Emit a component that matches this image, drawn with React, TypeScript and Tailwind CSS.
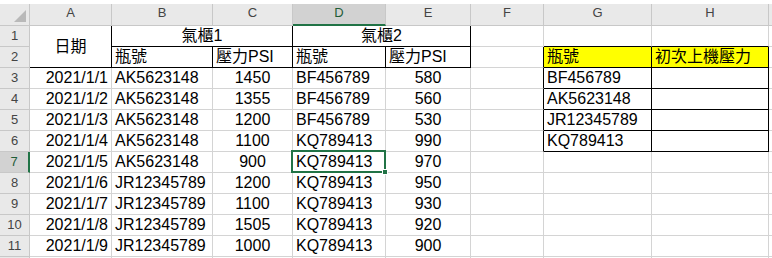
import React from "react";

const FONT = { fontFamily: '"Liberation Sans", "Noto Sans CJK TC", sans-serif' };

const COLS = ["A", "B", "C", "D", "E", "F", "G", "H", "I"];

const data = [
  ["2021/1/1", "AK5623148", "1450", "BF456789", "580", "BF456789"],
  ["2021/1/2", "AK5623148", "1355", "BF456789", "560", "AK5623148"],
  ["2021/1/3", "AK5623148", "1200", "BF456789", "530", "JR12345789"],
  ["2021/1/4", "AK5623148", "1100", "KQ789413", "990", "KQ789413"],
  ["2021/1/5", "AK5623148", "900", "KQ789413", "970", ""],
  ["2021/1/6", "JR12345789", "1200", "KQ789413", "950", ""],
  ["2021/1/7", "JR12345789", "1100", "KQ789413", "930", ""],
  ["2021/1/8", "JR12345789", "1505", "KQ789413", "920", ""],
  ["2021/1/9", "JR12345789", "1000", "KQ789413", "900", ""],
];

type CellProps = {
  r?: boolean; // black right border
  b?: boolean; // black bottom border
  align?: "left" | "center" | "right";
  className?: string;
  children?: React.ReactNode;
};

const Cell: React.FC<CellProps> = ({ r, b, align = "left", className = "", children }) => {
  const right = r ? "border-r-black" : "border-r-[#d4d4d4]";
  const bottom = b ? "border-b-black" : "border-b-[#d4d4d4]";
  const just =
    align === "center" ? "justify-center" : align === "right" ? "justify-end" : "justify-start";
  return (
    <div
      className={`flex items-center border-r border-b ${right} ${bottom} ${just} px-[3px] whitespace-nowrap text-[16px] text-black ${className}`}
    >
      {children}
    </div>
  );
};

const RowHead: React.FC<{ n?: number; active?: boolean }> = ({ n, active }) => (
  <div
    className={
      active
        ? "flex items-center justify-center border-b border-b-[#c8c8c8] border-r-2 border-r-[#217346] bg-[#d2d2d2] text-[13px] text-[#1f5d38]"
        : "flex items-center justify-center border-b border-r border-b-[#c8c8c8] border-r-[#c8c8c8] bg-[#e9e9e9] text-[13px] text-[#444]"
    }
  >
    {n}
  </div>
);

export default function App() {
  return (
    <div className="h-[258px] w-[772px] overflow-hidden bg-white pt-[4px]" style={FONT}>
      <div className="grid grid-cols-[30px_82px_101px_80px_93px_85px_73px_108px_117px_1fr] grid-rows-[22px_repeat(12,21px)]">
        {/* column headers */}
        <div className="relative border-b border-r border-[#c8c8c8] bg-[#e9e9e9]">
          <svg className="absolute right-[3px] bottom-[3px]" width="12" height="12" viewBox="0 0 12 12">
            <polygon points="12,0 12,12 0,12" fill="#b9b9b9" />
          </svg>
        </div>
        {COLS.map((c) =>
          c === "D" ? (
            <div
              key={c}
              className="flex items-center justify-center border-r border-r-[#c8c8c8] border-b-2 border-b-[#217346] bg-[#d2d2d2] pt-[1px] pb-[3px] text-[13px] text-[#1f5d38]"
            >
              {c}
            </div>
          ) : (
            <div
              key={c}
              className="flex items-center justify-center border-b border-r border-[#c8c8c8] bg-[#e9e9e9] pb-[3px] text-[13px] text-[#444]"
            >
              {c === "I" ? null : c}
            </div>
          )
        )}

        {/* row 1 */}
        <RowHead n={1} />
        <Cell r b align="center" className="row-span-2">
          日期
        </Cell>
        <Cell r b align="center" className="col-span-2">
          氣櫃1
        </Cell>
        <Cell r b align="center" className="col-span-2">
          氣櫃2
        </Cell>
        <Cell />
        <Cell b />
        <Cell b />
        <Cell />

        {/* row 2 */}
        <RowHead n={2} />
        <Cell r b>瓶號</Cell>
        <Cell r b>壓力PSI</Cell>
        <Cell r b>瓶號</Cell>
        <Cell r b>壓力PSI</Cell>
        <Cell r />
        <Cell r b className="bg-[#ffff00]">瓶號</Cell>
        <Cell r b className="bg-[#ffff00]">初次上機壓力</Cell>
        <Cell />

        {/* data rows */}
        {data.map((row, i) => {
          const n = i + 3;
          const inBox = n <= 6;
          return (
            <React.Fragment key={n}>
              <RowHead n={n} active={n === 7} />
              <Cell align="right">{row[0]}</Cell>
              <Cell>{row[1]}</Cell>
              <Cell align="center">{row[2]}</Cell>
              <Cell className={n === 7 ? "relative" : ""}>
                {row[3]}
                {n === 7 && (
                  <div className="pointer-events-none absolute -top-[2px] -left-[2px] -right-[1px] -bottom-[1px] border-2 border-[#217346]">
                    <div className="absolute -right-[4px] -bottom-[4px] h-[6px] w-[6px] border border-white bg-[#217346]" />
                  </div>
                )}
              </Cell>
              <Cell align="center">{row[4]}</Cell>
              <Cell r={inBox} />
              <Cell r={inBox} b={inBox}>{row[5]}</Cell>
              <Cell r={inBox} b={inBox} />
              <Cell />
            </React.Fragment>
          );
        })}

        {/* row 12, clipped by the frame */}
        <RowHead />
        {COLS.map((c) => (
          <Cell key={`r12${c}`} />
        ))}
      </div>
    </div>
  );
}
